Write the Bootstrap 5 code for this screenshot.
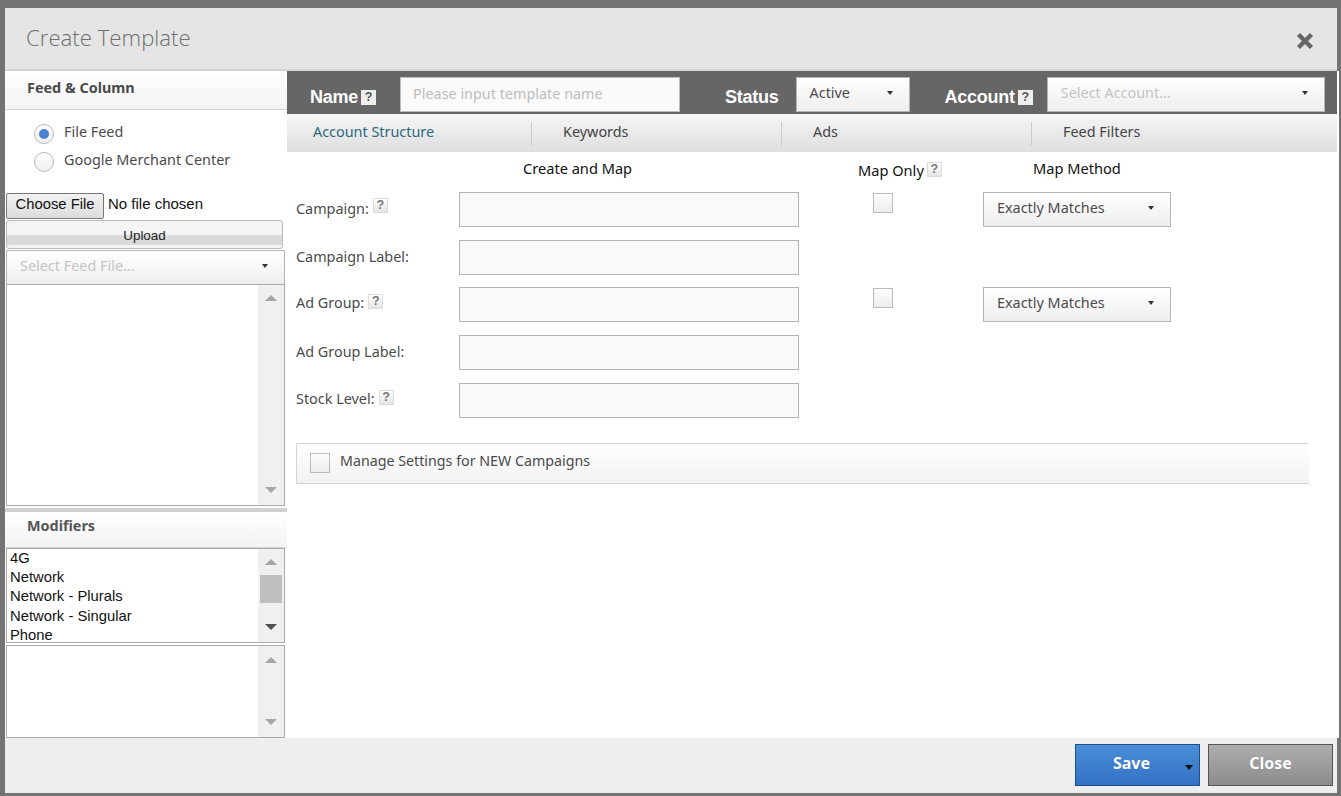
<!DOCTYPE html>
<html lang="en"><head><meta charset="utf-8"><title>Create Template</title>
<link href="https://cdn.jsdelivr.net/npm/bootstrap@5.3.0/dist/css/bootstrap.min.css" rel="stylesheet">
<style>
html,body{height:796px;overflow:hidden}
body{background:#737373;padding:8px 4px 3px 5px;font-family:"Noto Sans",sans-serif;font-size:14.4px;color:#4b4b4b;line-height:20px}
.shell{height:785px;background:#fff}
.top-head{height:61px;background:#e5e5e5;padding:12px 23px 0 21px}
.top-title{font-size:22.2px;line-height:36px;font-weight:300;color:#6f6f6f;margin:0;font-family:"Open Sans",sans-serif}
.x-close{margin-top:12px;padding:0;background:none;border:0;line-height:0;height:18px}
.mid{height:669px;border-top:2px solid #d4d4d4}
.left-col{width:282px;flex:none;background:#fff}
.right-col{width:1052px;flex:none;border-right:2px solid #fff}
.sec-head{height:39px;padding:7px 22px;font-weight:700;font-size:14.4px;color:#4a4a4a;background:linear-gradient(#fff,#f3f3f3);border-bottom:1px solid #d2d2d2}
.radio-list{padding:10px 0 0 29px;height:83px}
.radio-row{height:28px;gap:10px;line-height:24px}
.rad{width:20px;height:20px;border-radius:50%;border:1px solid #bbb;background:linear-gradient(#fff,#eee);flex:none;margin-top:4px;display:flex;align-items:center;justify-content:center}
.rad i{width:10px;height:10px;border-radius:50%;background:#4a80d4;display:block}
.file-row{padding-left:1px;height:27px;font-family:"Liberation Sans",sans-serif;color:#111;font-size:15px;line-height:22px;gap:4px}
.file-btn{width:98px;height:26px;padding:0 0 5px;border:1px solid #777;border-radius:2px;background:linear-gradient(#f2f2f2,#dcdcdc);font-size:14.8px;color:#111;line-height:20px}
.up-btn{display:block;width:277px;height:29px;margin:0 0 1px 1px;padding:0;border:1px solid #bbb;border-radius:3px;background:linear-gradient(#f4f4f4 0 50%,#dadada 50% 90%,#f4f4f4 90%);font-family:"Liberation Sans",sans-serif;font-size:13.4px;color:#222;line-height:29px}
.pick{display:flex;align-items:center;justify-content:space-between;background:linear-gradient(#fff,#eee);border:1px solid #b5b5b5;padding:0 16px 3px 13px;height:35px;border-radius:0;color:#4b4b4b;text-align:left}
.pick.dim{color:#c4c4c4}
.pick i{width:0;height:0;border:3px solid transparent;border-top:4px solid #333;border-bottom:0;flex:none}
.feed-pick{width:279px;margin-left:1px;border-bottom:0;height:34px}
.lbox{margin-left:1px;width:279px;border:1px solid #aaa;background:#fff}
.lb1{height:222px}.lb2{height:95px}.lb3{height:93px;margin-top:2px}
.lb-items{flex:1;min-width:0;font-family:"Liberation Sans",sans-serif;font-size:14.8px;color:#111;line-height:19.2px;padding:0 3px;overflow:hidden}
.lb-bar{width:26px;flex:none;background:#f0f0f0;padding:10px 0 12px;align-items:center}
.lb3 .lb-bar{padding-top:11px}
.lb-thumb{width:22px;height:28px;background:#bfbfbf;margin-top:10px}
.tri-up,.tri-dn{width:0;height:0;border-left:6.5px solid transparent;border-right:6.5px solid transparent}
.tri-up{border-bottom:6px solid #a6a6a6}.tri-dn{border-top:6px solid #a6a6a6}
.tri-dn.dark{border-top-color:#505050}
.mod-head{height:40px;margin-top:2px;border-top:4px solid #d0d0d0;padding:4px 22px;border-bottom:1px solid #d2d2d2;background:linear-gradient(#fff,#f3f3f3);font-weight:700;color:#555}
.dark-bar{height:43px;background:#666;padding:6px 12px 0 23px;color:#fff}
.dark-lab{font-family:"Liberation Sans",sans-serif;font-size:18px;font-weight:700;line-height:24px;padding-top:5px;height:35px;white-space:nowrap;letter-spacing:-.25px;display:flex;align-items:center}
.help{display:inline-block;width:15px;height:15px;background:linear-gradient(#fff,#e4e4e4);border:1px solid #ddd;color:#777;font:700 12.5px/13px "Liberation Sans",sans-serif;text-align:center;letter-spacing:0}
.dark-lab .help{margin-left:3px;background:#eee;color:#555;border:0;line-height:15px;flex:none}
.top-in{height:35px;width:280px;border:1px solid #bbb;border-radius:0;background:#fafafa;padding:0 12px 3px;font-size:14.4px;color:#c0c0c0;font-family:"Noto Sans",sans-serif}
.top-in::placeholder{color:#bdbdbd}
.tabs{height:38px;background:linear-gradient(#f6f6f6,#dedede)}
.tab-i{width:249px;padding-left:31px;line-height:36px;color:#444;height:38px}
.tab-i.on{width:244px;padding-left:26px;color:#2a6b80}
.tab-sep{width:1px;height:24px;background:#ccc;margin-top:8px;flex:none}
.form-pane{padding:0 0 0 9px;color:#4b4b4b}
.col-heads{height:40px;color:#111;font-size:14.6px}
.fld-row{height:35px;margin-bottom:13px}
.fld-lab{width:163px;flex:none;padding-top:7px;white-space:nowrap}
.fld-lab.has-help{padding-top:6px}
.fld-lab .help{margin-left:4px;vertical-align:5px}
.fld-lab .help.low{vertical-align:3px}
.fld-in{width:340px;height:35px;flex:none;border:1px solid #b5b5b5;border-radius:0;background:#f9f9f9}
.ch{width:20px;height:20px;border:1px solid #bbb;background:linear-gradient(#fdfdfd,#eee);flex:none;display:block}
.map-ck{margin:1px 0 0 74px;width:20px}
.meth{width:188px;margin-left:90px;padding-bottom:4px}
.mng{width:1013px;height:41px;margin-top:25px;border:1px solid #d5d5d5;border-right:0;background:linear-gradient(#fff,#f2f2f2);padding:9px 13px;gap:10px;line-height:16px;font-size:14.25px}
.foot-bar{height:55px;background:#eee;padding:6px 4px 0 0;gap:8px}
.act{width:125px;height:42px;border-radius:0;font-weight:700;font-size:16px;color:#fff;padding:0 0 4px;position:relative;text-shadow:0 0 1px rgba(0,0,0,.2)}
.act-save{background:linear-gradient(#4a8ed6,#3272c5);border:1px solid #1d4f8a;padding-right:12px}
.act-close{background:linear-gradient(#aeaeae,#8c8c8c);border:1px solid #555}
.caret-mark{position:absolute;right:6px;top:20px;width:0;height:0;border:4px solid transparent;border-top:5px solid #111;border-bottom:0}
.name-in{margin-left:24px}
.status-lab{margin-left:45px}
.status-pick{width:114px;margin-left:17px}
.acct-lab{margin-left:35px}
.acct-pick{width:278px;margin-left:14px}
.ch1{margin-left:227px;width:335px;padding-top:6px}
.ch2{padding-top:8px;width:175px}
.ch2 .help{margin-left:3px;vertical-align:3px}
.ch3{padding-top:6px}
.form-pane .fld-row:nth-child(3){margin-bottom:12px}
</style></head>
<body>
<div class="shell d-flex flex-column">
  <div class="top-head d-flex justify-content-between">
    <h1 class="top-title">Create Template</h1>
    <button class="x-close" type="button" aria-label="Close"><svg width="18" height="18" viewBox="0 0 18 18"><path d="M2.5 2.5L15.5 15.5M15.5 2.5L2.5 15.5" stroke="#666" stroke-width="4.4"/></svg></button>
  </div>
  <div class="mid d-flex">
    <div class="left-col">
      <div class="sec-head">Feed &amp; Column</div>
      <div class="radio-list">
        <div class="radio-row d-flex"><span class="rad"><i></i></span><span>File Feed</span></div>
        <div class="radio-row d-flex"><span class="rad"></span><span>Google Merchant Center</span></div>
      </div>
      <div class="file-row d-flex"><button class="file-btn" type="button">Choose File</button><span>No file chosen</span></div>
      <button class="up-btn" type="button">Upload</button>
      <div class="pick dim feed-pick"><span>Select Feed File...</span><i></i></div>
      <div class="lbox lb1 d-flex"><div class="lb-items"></div><div class="lb-bar d-flex flex-column justify-content-between"><span class="tri-up"></span><span class="tri-dn"></span></div></div>
      <div class="mod-head">Modifiers</div>
      <div class="lbox lb2 d-flex"><div class="lb-items"><div>4G</div><div>Network</div><div>Network - Plurals</div><div>Network - Singular</div><div>Phone</div></div><div class="lb-bar d-flex flex-column"><span class="tri-up"></span><span class="lb-thumb"></span><span class="tri-dn dark mt-auto"></span></div></div>
      <div class="lbox lb3 d-flex"><div class="lb-items"></div><div class="lb-bar d-flex flex-column justify-content-between"><span class="tri-up"></span><span class="tri-dn"></span></div></div>
    </div>
    <div class="right-col">
      <div class="dark-bar d-flex">
        <div class="dark-lab">Name<span class="help">?</span></div>
        <input class="top-in name-in" placeholder="Please input template name">
        <div class="dark-lab status-lab">Status</div>
        <div class="pick status-pick"><span>Active</span><i></i></div>
        <div class="dark-lab acct-lab">Account<span class="help">?</span></div>
        <div class="pick dim acct-pick"><span>Select Account...</span><i></i></div>
      </div>
      <div class="tabs d-flex">
        <div class="tab-i on">Account Structure</div><div class="tab-sep"></div>
        <div class="tab-i">Keywords</div><div class="tab-sep"></div>
        <div class="tab-i">Ads</div><div class="tab-sep"></div>
        <div class="tab-i">Feed Filters</div>
      </div>
      <div class="form-pane">
        <div class="col-heads d-flex">
          <div class="ch1">Create and Map</div><div class="ch2">Map Only<span class="help">?</span></div><div class="ch3">Map Method</div>
        </div>
        <div class="fld-row d-flex"><div class="fld-lab has-help">Campaign:<span class="help">?</span></div><div class="fld-in"></div><span class="ch map-ck"></span><div class="pick meth"><span>Exactly Matches</span><i></i></div></div>
        <div class="fld-row d-flex"><div class="fld-lab">Campaign Label:</div><div class="fld-in"></div></div>
        <div class="fld-row d-flex"><div class="fld-lab has-help">Ad Group:<span class="help low">?</span></div><div class="fld-in"></div><span class="ch map-ck"></span><div class="pick meth"><span>Exactly Matches</span><i></i></div></div>
        <div class="fld-row d-flex"><div class="fld-lab">Ad Group Label:</div><div class="fld-in"></div></div>
        <div class="fld-row d-flex"><div class="fld-lab has-help">Stock Level:<span class="help low">?</span></div><div class="fld-in"></div></div>
        <div class="mng d-flex"><span class="ch"></span><span>Manage Settings for NEW Campaigns</span></div>
      </div>
    </div>
  </div>
  <div class="foot-bar d-flex justify-content-end">
    <button class="btn act act-save" type="button">Save<span class="caret-mark"></span></button>
    <button class="btn act act-close" type="button">Close</button>
  </div>
</div>
</body></html>
